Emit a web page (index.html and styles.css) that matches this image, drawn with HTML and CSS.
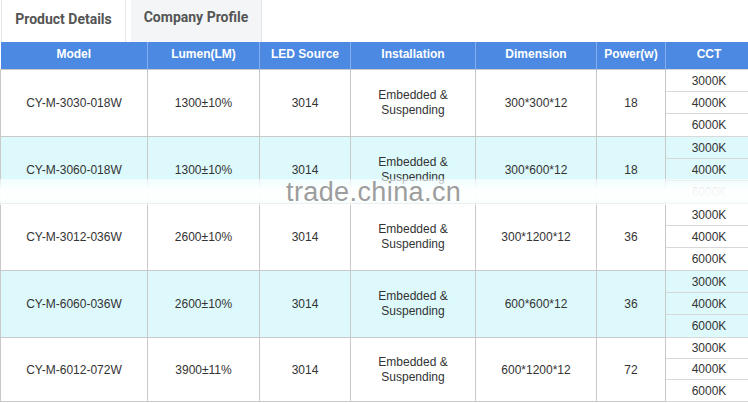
FILE: index.html
```html
<!DOCTYPE html>
<html>
<head>
<meta charset="utf-8">
<link rel="stylesheet" href="styles.css">
</head>
<body>
<div class="page">
  <div class="tabs">
    <div class="tab tab-active">Product Details</div>
    <div class="tab tab-idle">Company Profile</div>
  </div>
  <div class="table-wrap">
    <table class="spec">
      <colgroup>
        <col class="c-model"><col class="c-lumen"><col class="c-led"><col class="c-inst"><col class="c-dim"><col class="c-pow"><col class="c-cct">
      </colgroup>
      <thead>
        <tr><th>Model</th><th>Lumen(LM)</th><th>LED Source</th><th>Installation</th><th>Dimension</th><th>Power(w)</th><th>CCT</th></tr>
      </thead>
      <tbody>
        <tr class="odd"><td rowspan="3">CY-M-3030-018W</td><td rowspan="3">1300±10%</td><td rowspan="3">3014</td><td rowspan="3" class="inst">Embedded &amp;<br>Suspending</td><td rowspan="3">300*300*12</td><td rowspan="3">18</td><td class="cct">3000K</td></tr>
        <tr class="odd"><td class="cct">4000K</td></tr>
        <tr class="odd tail"><td class="cct">6000K</td></tr>

        <tr class="even"><td rowspan="3">CY-M-3060-018W</td><td rowspan="3">1300±10%</td><td rowspan="3">3014</td><td rowspan="3" class="inst">Embedded &amp;<br>Suspending</td><td rowspan="3">300*600*12</td><td rowspan="3">18</td><td class="cct">3000K</td></tr>
        <tr class="even"><td class="cct">4000K</td></tr>
        <tr class="even tail"><td class="cct">6000K</td></tr>

        <tr class="odd"><td rowspan="3">CY-M-3012-036W</td><td rowspan="3">2600±10%</td><td rowspan="3">3014</td><td rowspan="3" class="inst">Embedded &amp;<br>Suspending</td><td rowspan="3">300*1200*12</td><td rowspan="3">36</td><td class="cct">3000K</td></tr>
        <tr class="odd"><td class="cct">4000K</td></tr>
        <tr class="odd tail"><td class="cct">6000K</td></tr>

        <tr class="even"><td rowspan="3">CY-M-6060-036W</td><td rowspan="3">2600±10%</td><td rowspan="3">3014</td><td rowspan="3" class="inst">Embedded &amp;<br>Suspending</td><td rowspan="3">600*600*12</td><td rowspan="3">36</td><td class="cct">3000K</td></tr>
        <tr class="even"><td class="cct">4000K</td></tr>
        <tr class="even tail"><td class="cct">6000K</td></tr>

        <tr class="odd last"><td rowspan="3">CY-M-6012-072W</td><td rowspan="3">3900±11%</td><td rowspan="3">3014</td><td rowspan="3" class="inst">Embedded &amp;<br>Suspending</td><td rowspan="3">600*1200*12</td><td rowspan="3">72</td><td class="cct">3000K</td></tr>
        <tr class="odd last"><td class="cct">4000K</td></tr>
        <tr class="odd last tail"><td class="cct">6000K</td></tr>
      </tbody>
    </table>
    <div class="watermark"><span class="wm-text">trade.china.cn</span></div>
  </div>
</div>
</body>
</html>
```
FILE: styles.css
```css
html, body {
  margin: 0;
  padding: 0;
  background: #ffffff;
}
.page {
  width: 748px;
  height: 403px;
  overflow: hidden;
  font-family: "Liberation Sans", Arial, sans-serif;
}
.tabs {
  display: flex;
  height: 42px;
  gap: 5px;
}
.tab {
  box-sizing: border-box;
  height: 42px;
  font-family: Roboto, "Liberation Sans", sans-serif;
  font-weight: 700;
  font-size: 14px;
  color: #555;
  display: flex;
  justify-content: center;
}
.tab-active {
  width: 125px;
  margin-left: 1px;
  border-left: 1px solid #e6e6e6;
  border-right: 1px solid #e6e6e6;
  background: #fff;
  padding-top: 11px;
}
.tab-idle {
  width: 131px;
  background: #f4f5f7;
  border-right: 1px solid #e6e6e6;
  padding-top: 9px;
}
.table-wrap {
  position: relative;
  width: 748px;
  overflow: hidden;
}
.spec {
  border-collapse: collapse;
  table-layout: fixed;
  width: 752px;
  font-size: 12px;
  color: #333;
}
.c-model { width: 147px; }
.c-lumen { width: 112px; }
.c-led { width: 91px; }
.c-inst { width: 125px; }
.c-dim { width: 121px; }
.c-pow { width: 69px; }
.c-cct { width: 87px; }
.spec th {
  background: #4b89e3;
  color: #fff;
  font-weight: 700;
  height: 23px;
  padding: 0 0 4px 0;
  border-left: 1px solid #86aef0;
  border-right: 1px solid #86aef0;
  text-align: center;
  vertical-align: middle;
}
.spec th:first-child { border-left: none; }
.spec td {
  border: 1px solid #c9c9c9;
  padding: 0;
  text-align: center;
  vertical-align: middle;
  height: 21px;
}
.spec tr.tail td.cct { height: 22px; }
.spec tr.last td.cct { height: 20px; }
.spec tr.last.tail td.cct { height: 21px; }
.spec tr.even td { background: #ddf9fb; }
.spec tr.odd td { background: #fff; }
.spec td.cct {
  border-top-color: #d8d8d8;
  border-bottom-color: #d8d8d8;
}
.spec td.inst {
  line-height: 15px;
}
.watermark {
  position: absolute;
  left: 0;
  top: 137px;
  width: 748px;
  height: 26px;
  background: linear-gradient(to bottom, rgba(255,255,255,0.55), rgba(255,255,255,0.95) 40%, rgba(255,255,255,0.95) 80%, rgba(255,255,255,0.6));
  display: flex;
  justify-content: flex-start;
  align-items: center;
}
.wm-text {
  margin-left: 286px;
  font-family: "Liberation Sans", Arial, sans-serif;
  font-size: 27px;
  color: #9d9d9d;
  line-height: 26px;
  letter-spacing: 0.4px;
}
```
